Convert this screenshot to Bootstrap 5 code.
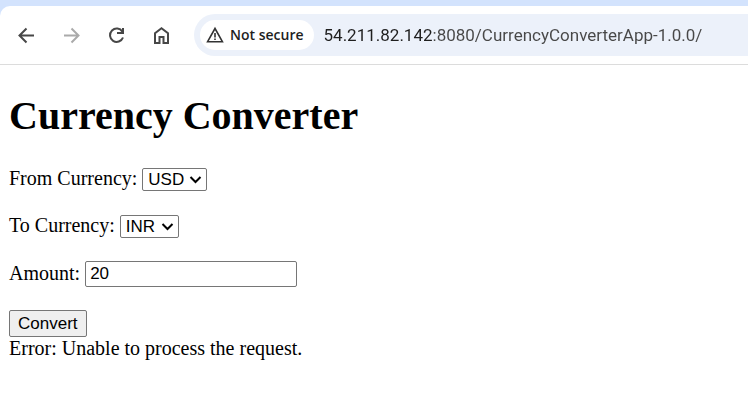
<!DOCTYPE html>
<html lang="en">
<head>
<meta charset="utf-8">
<meta name="viewport" content="width=device-width, initial-scale=1">
<title>Currency Converter</title>
<link href="https://cdn.jsdelivr.net/npm/bootstrap@5.3.0/dist/css/bootstrap.min.css" rel="stylesheet">
<style>
  body { font-family: "Liberation Serif", serif; font-size: 20px; line-height: 23px; color: #000; }
  .browser-top { background: #d3e3fd; padding-top: 6px; }
  .toolbar { background: #fff; border-bottom: 1px solid #dcdcdc; border-top-left-radius: 10px; padding: 8px 0 8px 14px; }
  .nav-tools { gap: 20px; margin-right: 20px; }
  .tool { width: 25px; height: 25px; color: #474747; line-height: 0; }
  .tool:disabled { color: #aaa; border: 0; opacity: 1; }
  .tool svg { width: 19px; height: 19px; fill: none; stroke: currentColor; stroke-width: 2; }
  .omnibox { background: #ecf1fa; border-radius: 21px 0 0 21px; height: 42px; padding-left: 6px; }
  .security { height: 30px; padding: 0 10px 0 6px; gap: 6px; background: #fff; color: #1f1f1f; font-family: "Open Sans", sans-serif; font-size: 14px; font-weight: 600; line-height: 30px; }
  .security svg { width: 18px; height: 18px; fill: none; stroke: #333; stroke-width: 2; }
  .address { margin-left: 10px; min-width: 0; font-family: Roboto, sans-serif; font-size: 17px; line-height: 24px; outline: 0;
    color: transparent; background: linear-gradient(90deg, #1f1f1f 109px, #474747 109px); background-clip: text; -webkit-background-clip: text; }
  .page { padding: 28px 9px; }
  h1 { font-size: 40px; line-height: 46px; margin-bottom: 28px; }
  .field-row { gap: 5px; min-height: 24px; margin-bottom: 23px; }
  .field-row label { line-height: 22px; padding-bottom: 2px; }
  .control { font-family: "Liberation Sans", sans-serif; font-size: 17px; line-height: 19px; color: #000; border: 1px solid #767676; border-radius: 2px; background: #fff; }
  select.control { appearance: none; height: 23px; padding: 0 22px 0 5px; }
  .picker { display: grid; align-items: center; }
  .picker > * { grid-area: 1 / 1; }
  .picker svg { justify-self: end; margin-right: 5px; width: 13px; height: 9px; fill: none; stroke: #000; stroke-width: 2; pointer-events: none; }
  input.control { width: 212px; height: 26px; padding: 0 4px; }
  button.control { background: #efefef; height: 27px; padding: 0 8px; }
</style>
<script src="https://cdn.jsdelivr.net/npm/bootstrap@5.3.0/dist/js/bootstrap.bundle.min.js" defer></script>
</head>
<body>
<header class="browser-top">
  <div class="toolbar d-flex align-items-center">
    <nav class="nav-tools d-flex align-items-center" aria-label="Browser">
      <button class="tool btn p-0 border-0" type="button" aria-label="Back"><svg viewBox="0 0 19 19"><path d="M17 9.500H3M9.500 2.500l-7 7 7 7"/></svg></button>
      <button class="tool btn p-0 border-0" type="button" aria-label="Forward" disabled><svg viewBox="0 0 19 19"><path d="M2 9.500h14M9.500 2.500l7 7-7 7"/></svg></button>
      <button class="tool btn p-0 border-0" type="button" aria-label="Reload"><svg viewBox="0 0 19 19"><path d="M15.400 5.700A6.700 6.700 0 1 0 16 11.500M16 2v5h-6"/></svg></button>
      <button class="tool btn p-0 border-0" type="button" aria-label="Home"><svg viewBox="0 0 19 19"><path d="M3 17V7.300L9.500 2.300 16 7.300V17h-4.500v-6h-4v6z"/></svg></button>
    </nav>
    <div class="omnibox d-flex align-items-center flex-grow-1">
      <button class="security btn border-0 rounded-pill d-flex align-items-center flex-shrink-0" type="button"><svg viewBox="0 0 18 18"><path stroke-width="1.600" d="M9 2.500L1.600 15.700h14.800z"/><path stroke-width="1.600" d="M9 7v4.500M9 12.500v1.600"/></svg>Not secure</button>
      <input class="address border-0 p-0 flex-grow-1" type="text" aria-label="Address" value="54.211.82.142:8080/CurrencyConverterApp-1.0.0/">
    </div>
  </div>
</header>
<main class="page">
  <h1 class="fw-bold">Currency Converter</h1>
  <form>
    <div class="field-row d-flex align-items-center">
      <label for="from">From Currency:</label>
      <div class="picker"><select class="control" id="from"><option>USD</option></select><svg viewBox="0 0 13 9"><path d="M1.500 2l5 5 5-5"/></svg></div>
    </div>
    <div class="field-row d-flex align-items-center">
      <label for="to">To Currency:</label>
      <div class="picker"><select class="control" id="to"><option>INR</option></select><svg viewBox="0 0 13 9"><path d="M1.500 2l5 5 5-5"/></svg></div>
    </div>
    <div class="field-row d-flex align-items-center">
      <label for="amount">Amount:</label>
      <input class="control" id="amount" type="text" value="20">
    </div>
    <button class="control d-block" type="button">Convert</button>
  </form>
  <div role="status">Error: Unable to process the request.</div>
</main>
</body>
</html>
